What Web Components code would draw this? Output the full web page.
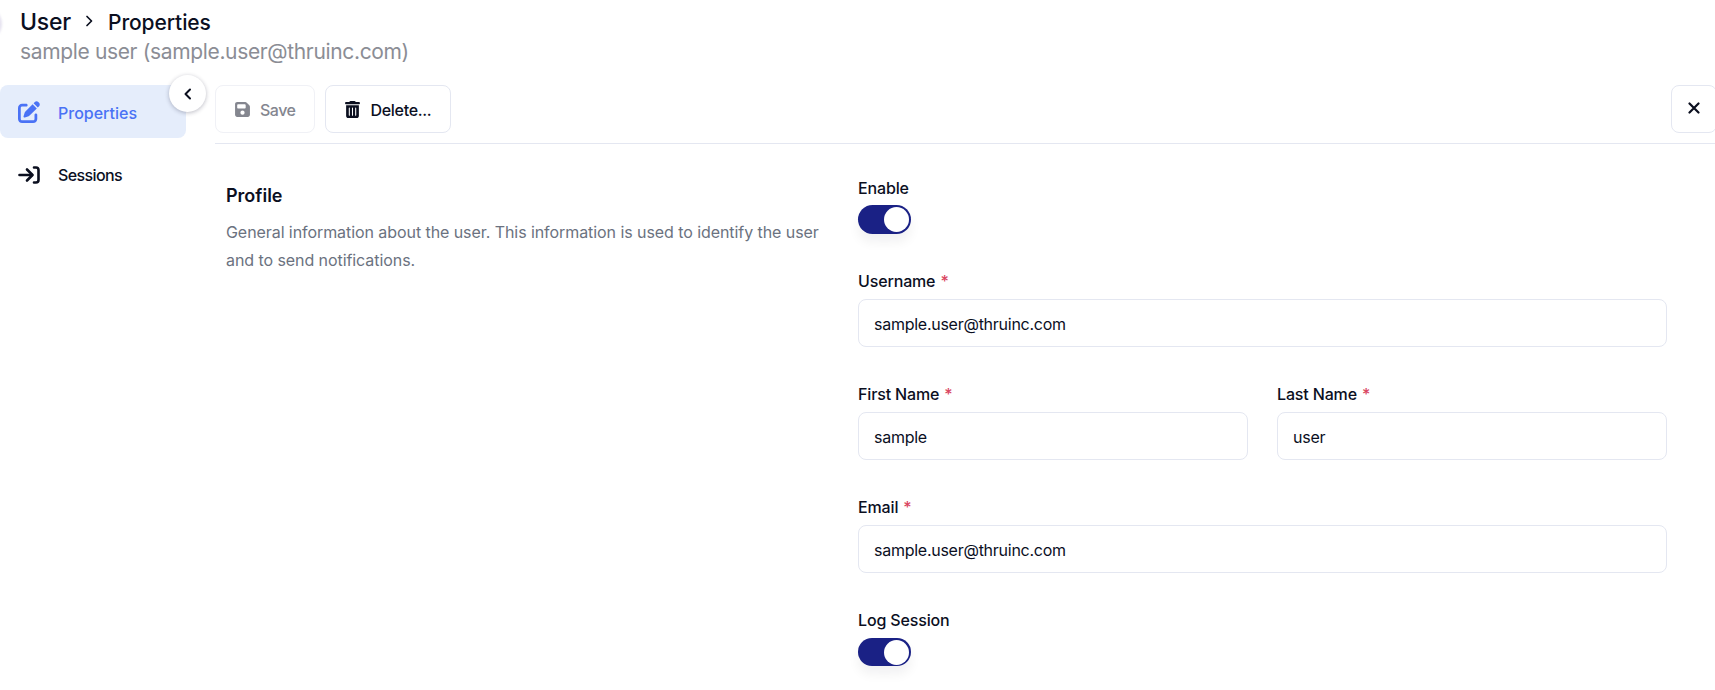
<!DOCTYPE html>
<html>
<head>
<meta charset="utf-8">
<title>User Properties</title>
<style>
  html, body { margin: 0; height: 100%; background: #fff; overflow: hidden; }
  body { font-family: Inter, "Noto Sans", sans-serif; color: #0b0f1f; }
</style>
</head>
<body>
<user-page></user-page>
<script>
const ICONS = {
  edit: `<svg viewBox="0 0 512 512" width="24" height="24" fill="currentColor"><path d="M471.6 21.7c-21.9-21.9-57.3-21.9-79.2 0L362.3 51.7l97.9 97.9 30.1-30.1c21.9-21.9 21.9-57.3 0-79.2L471.6 21.7zm-299.2 220c-6.1 6.1-10.8 13.6-13.5 21.9l-29.6 88.8c-2.9 8.6-.6 18.1 5.8 24.6s15.9 8.7 24.6 5.8l88.8-29.6c8.2-2.7 15.7-7.4 21.9-13.5L437.7 172.3 339.7 74.3 172.4 241.7zM96 64C43 64 0 107 0 160V416c0 53 43 96 96 96H352c53 0 96-43 96-96V320c0-17.7-14.3-32-32-32s-32 14.3-32 32v96c0 17.7-14.3 32-32 32H96c-17.7 0-32-14.3-32-32V160c0-17.7 14.3-32 32-32h96c17.7 0 32-14.3 32-32s-14.3-32-32-32H96z"/></svg>`,
  signin: `<svg viewBox="0 0 22 18" width="22" height="18" fill="none" stroke="currentColor" stroke-width="2.6" stroke-linecap="round" stroke-linejoin="round"><path d="M16 1.5h2a2.500 2.500 0 0 1 2.500 2.500v10a2.500 2.500 0 0 1-2.500 2.500h-2"/><path d="M9 3.500l5.500 5.500-5.500 5.500"/><path d="M14 9H1.500"/></svg>`,
  save: `<svg viewBox="0 0 448 512" width="15" height="17" fill="currentColor"><path d="M64 32C28.7 32 0 60.7 0 96V416c0 35.3 28.7 64 64 64H384c35.3 0 64-28.7 64-64V173.3c0-17-6.7-33.3-18.7-45.3L352 50.7C340 38.7 323.700 32 306.700 32H64zm0 96c0-17.700 14.300-32 32-32H288c17.700 0 32 14.300 32 32v64c0 17.700-14.300 32-32 32H96c-17.700 0-32-14.300-32-32V128zM224 288a64 64 0 1 1 0 128 64 64 0 1 1 0-128z"/></svg>`,
  trash: `<svg viewBox="0 0 448 512" width="15" height="17" fill="currentColor"><path d="M135.200 17.700C140.600 6.800 151.700 0 163.800 0H284.200c12.100 0 23.200 6.800 28.600 17.700L320 32h96c17.700 0 32 14.300 32 32s-14.300 32-32 32H32C14.300 96 0 81.700 0 64S14.300 32 32 32h96l7.200-14.300zM32 128H416V448c0 35.300-28.700 64-64 64H96c-35.300 0-64-28.700-64-64V128zm96 64c-8.800 0-16 7.200-16 16V432c0 8.800 7.200 16 16 16s16-7.200 16-16V208c0-8.800-7.200-16-16-16zm96 0c-8.800 0-16 7.200-16 16V432c0 8.800 7.200 16 16 16s16-7.200 16-16V208c0-8.800-7.200-16-16-16zm96 0c-8.800 0-16 7.200-16 16V432c0 8.800 7.200 16 16 16s16-7.200 16-16V208c0-8.800-7.200-16-16-16z"/></svg>`,
  close: `<svg viewBox="0 0 12 12" width="12" height="12" fill="none" stroke="currentColor" stroke-width="2.2" stroke-linecap="round"><path d="M1.500 1.500l9 9M10.500 1.500l-9 9"/></svg>`,
  chevronLeft: `<svg viewBox="0 0 8 12" width="8" height="12" fill="none" stroke="currentColor" stroke-width="2" stroke-linecap="round" stroke-linejoin="round"><path d="M6 1.500L1.500 6 6 10.500"/></svg>`,
  chevronRight: `<svg viewBox="0 0 8 12" width="8" height="12" fill="none" stroke="currentColor" stroke-width="1.700" stroke-linecap="round" stroke-linejoin="round"><path d="M2 1.500L6.500 6 2 10.500"/></svg>`
};

class NavItem extends HTMLElement {
  constructor() {
    super();
    this.attachShadow({ mode: "open" });
    this.shadowRoot.innerHTML = `
    <style>
      :host {
        display: flex;
        align-items: center;
        gap: 18px;
        height: 53px;
        box-sizing: border-box;
        padding-left: 18px;
        border-radius: 8px;
        font-size: 16px;
        font-weight: 500;
        color: #0b0f1f;
      }
      :host([active]) { background: #e5edfb; color: #4a72f5; padding-top: 2px; }
      :host([active]) .icon { margin-top: -2px; }
      .icon { display: flex; width: 22px; justify-content: center; }
    </style>
    <span class="icon">${ICONS[this.getAttribute("icon")]}</span>
    <slot></slot>`;
  }
}
customElements.define("nav-item", NavItem);

class ToolButton extends HTMLElement {
  constructor() {
    super();
    this.attachShadow({ mode: "open" });
    const icon = this.getAttribute("icon");
    this.shadowRoot.innerHTML = `
    <style>
      :host {
        display: inline-flex;
        align-items: center;
        gap: 10px;
        height: 48px;
        box-sizing: border-box;
        padding: 2px 19px 0;
        border: 1px solid #e4e7f1;
        border-radius: 8px;
        background: #fff;
        font-size: 16px;
        font-weight: 500;
        color: #0b0f1f;
      }
      :host([disabled]) { color: #84868f; border-color: #f0f1f6; }
      .icon { display: flex; margin-top: -2px; }
    </style>
    <span class="icon">${ICONS[icon]}</span>
    <slot></slot>`;
  }
}
customElements.define("tool-button", ToolButton);

class ToggleSwitch extends HTMLElement {
  constructor() {
    super();
    this.attachShadow({ mode: "open" });
    this.shadowRoot.innerHTML = `
    <style>
      :host {
        display: block;
        width: 53px;
        height: 28.5px;
        box-sizing: border-box;
        padding: 2px;
        border-radius: 15px;
        background: #1a2185;
        box-shadow: 0 8px 12px rgba(20, 20, 40, 0.06);
      }
      .knob {
        display: block;
        width: 25px;
        height: 25px;
        margin-left: 24px;
        border-radius: 50%;
        background: #fff;
      }
    </style>
    <span class="knob"></span>`;
  }
}
customElements.define("toggle-switch", ToggleSwitch);

class FormField extends HTMLElement {
  constructor() {
    super();
    this.attachShadow({ mode: "open" });
    const required = this.hasAttribute("required");
    this.shadowRoot.innerHTML = `
    <style>
      :host { display: block; min-width: 0; }
      label {
        display: block;
        height: 24px;
        line-height: 24px;
        margin-bottom: 5.5px;
        font-size: 16px;
        font-weight: 500;
        letter-spacing: -0.15px;
        color: #0b0f1f;
      }
      .req { color: #d9455f; margin-left: 5px; }
    </style>
    <label>${this.getAttribute("label")}${required ? '<span class="req">*</span>' : ""}</label>
    <slot></slot>`;
  }
}
customElements.define("form-field", FormField);

class TextBox extends HTMLElement {
  constructor() {
    super();
    this.attachShadow({ mode: "open" });
    this.shadowRoot.innerHTML = `
    <style>
      :host {
        display: flex;
        align-items: center;
        height: 48px;
        box-sizing: border-box;
        padding: 2px 15px 0;
        border: 1px solid #e4e7f1;
        border-radius: 8px;
        background: #fff;
        font-size: 16px;
        letter-spacing: -0.26px;
        color: #0b0f1f;
      }
    </style>
    <slot></slot>`;
  }
}
customElements.define("text-box", TextBox);

class ProfileForm extends HTMLElement {
  constructor() {
    super();
    this.attachShadow({ mode: "open" });
    this.shadowRoot.innerHTML = `
    <style>
      :host {
        display: grid;
        grid-template-columns: 632px 809px;
        padding: 31.5px 0 0 11px;
      }
      h2 {
        margin: 6px 0 0;
        font-size: 18px;
        line-height: 28px;
        font-weight: 600;
        color: #0b0f1f;
      }
      p {
        margin: 8.5px 0 0;
        max-width: 600px;
        font-size: 16px;
        line-height: 28px;
        letter-spacing: -0.07px;
        color: #6b7280;
      }
      .fields { display: flex; flex-direction: column; gap: 35.5px; }
      .pair { display: grid; grid-template-columns: 1fr 1fr; column-gap: 29px; }
    </style>
    <div>
      <h2>Profile</h2>
      <p>General information about the user. This information is used to identify the user and to send notifications.</p>
    </div>
    <div class="fields">
      <form-field label="Enable"><toggle-switch></toggle-switch></form-field>
      <form-field label="Username" required><text-box>sample.user@thruinc.com</text-box></form-field>
      <div class="pair">
        <form-field label="First Name" required><text-box>sample</text-box></form-field>
        <form-field label="Last Name" required><text-box>user</text-box></form-field>
      </div>
      <form-field label="Email" required><text-box>sample.user@thruinc.com</text-box></form-field>
      <form-field label="Log Session"><toggle-switch></toggle-switch></form-field>
    </div>`;
  }
}
customElements.define("profile-form", ProfileForm);

class UserPage extends HTMLElement {
  constructor() {
    super();
    this.attachShadow({ mode: "open" });
    this.shadowRoot.innerHTML = `
    <style>
      :host {
        display: flex;
        flex-direction: column;
        position: relative;
        height: 690px;
        overflow: hidden;
        font-family: Inter, "Noto Sans", sans-serif;
      }
      header { height: 85px; box-sizing: border-box; padding: 6px 0 0 20px; }
      .crumbs {
        display: flex;
        align-items: center;
        height: 32px;
        font-size: 23px;
        font-weight: 500;
        letter-spacing: -0.2px;
        color: #0b0f1f;
      }
      .crumbs .sep { display: flex; margin: -2px 15px 0 14px; }
      .crumbs .leaf { font-size: 21px; letter-spacing: -0.1px; }
      .sub { font-size: 21px; line-height: 28px; letter-spacing: -0.35px; color: #8b8d95; }
      .blip {
        position: absolute;
        left: -32px;
        top: 7px;
        width: 34px;
        height: 34px;
        border-radius: 50%;
        background: #e6e3f0;
        filter: blur(1px);
      }
      .body { flex: 1; display: flex; position: relative; }
      nav { width: 186px; flex: none; display: flex; flex-direction: column; gap: 10px; }
      .collapse {
        position: absolute;
        left: 169px;
        top: -10px;
        width: 37px;
        height: 37px;
        display: flex;
        align-items: center;
        justify-content: center;
        border-radius: 50%;
        background: #fff;
        box-shadow: 0 1px 4px rgba(30, 30, 60, 0.3);
        color: #0b0f1f;
      }
      main { flex: 1; min-width: 0; margin-left: 29px; }
      .toolbar {
        display: flex;
        gap: 10px;
        height: 59px;
        box-sizing: border-box;
        border-bottom: 1px solid #e4e7f1;
      }
      .toolbar .end { margin-left: auto; margin-right: -2px; }
      .close { padding: 0 15.5px; width: 46px; }
    </style>
    <span class="blip"></span>
    <header>
      <div class="crumbs"><span>User</span><span class="sep">${ICONS.chevronRight}</span><span class="leaf">Properties</span></div>
      <div class="sub">sample user (sample.user@thruinc.com)</div>
    </header>
    <div class="body">
      <nav>
        <nav-item icon="edit" active>Properties</nav-item>
        <nav-item icon="signin" style="letter-spacing:-0.6px">Sessions</nav-item>
      </nav>
      <span class="collapse">${ICONS.chevronLeft}</span>
      <main>
        <div class="toolbar">
          <tool-button icon="save" disabled style="letter-spacing:-0.5px">Save</tool-button>
          <tool-button icon="trash" style="letter-spacing:-0.3px">Delete...</tool-button>
          <tool-button icon="close" class="end close"></tool-button>
        </div>
        <profile-form></profile-form>
      </main>
    </div>`;
  }
}
customElements.define("user-page", UserPage);
</script>
</body>
</html>
